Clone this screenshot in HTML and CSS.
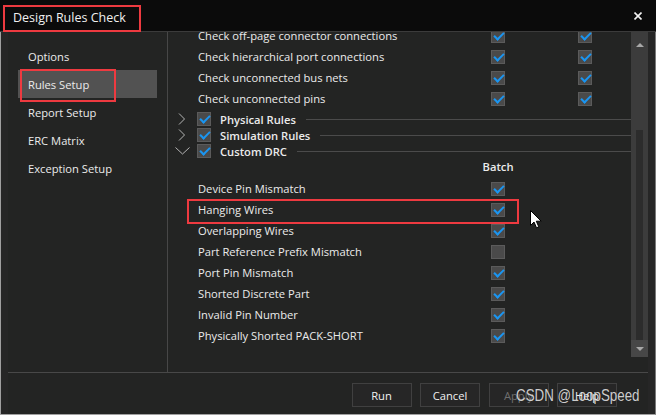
FILE: index.html
```html
<!DOCTYPE html>
<html>
<head>
<meta charset="utf-8">
<link rel="stylesheet" href="styles.css">
</head>
<body>
<div class="window">
  <header class="titlebar">
    <span class="title">Design Rules Check</span>
    <svg class="close" width="8" height="8" viewBox="0 0 8 8"><path d="M0.5 0.5 L7.5 7.5 M7.5 0.5 L0.5 7.5" stroke="#f2f2f2" stroke-width="1.6"/></svg>
  </header>
  <div class="body">
    <div class="main">
      <nav class="sidebar">
        <div class="nav-item">Options</div>
        <div class="nav-item selected">Rules Setup<span class="mark mark-nav"></span></div>
        <div class="nav-item">Report Setup</div>
        <div class="nav-item">ERC Matrix</div>
        <div class="nav-item">Exception Setup</div>
      </nav>
      <section class="content">
        <div class="list">
          <div class="scroller">
            <div class="row"><span>Check off-page connector connections</span><i class="cb on"></i><span></span><i class="cb on"></i></div>
            <div class="row"><span>Check hierarchical port connections</span><i class="cb on"></i><span></span><i class="cb on"></i></div>
            <div class="row"><span>Check unconnected bus nets</span><i class="cb on"></i><span></span><i class="cb on"></i></div>
            <div class="row"><span>Check unconnected pins</span><i class="cb on"></i><span></span><i class="cb on"></i></div>
            <div class="groups">
              <div class="group"><span class="chev"><svg width="8" height="12" viewBox="0 0 8 12"><path d="M1 0.5 L6.5 6 L1 11.5" fill="none" stroke="#b4b4b4" stroke-width="1"/></svg></span><i class="cb on"></i><span class="label">Physical Rules</span><span class="rule"></span></div>
              <div class="group"><span class="chev"><svg width="8" height="12" viewBox="0 0 8 12"><path d="M1 0.5 L6.5 6 L1 11.5" fill="none" stroke="#b4b4b4" stroke-width="1"/></svg></span><i class="cb on"></i><span class="label">Simulation Rules</span><span class="rule"></span></div>
              <div class="group"><span class="chev"><svg width="15" height="8" viewBox="0 0 15 8"><path d="M0.5 0.5 L7.5 7 L14.5 0.5" fill="none" stroke="#b4b4b4" stroke-width="1"/></svg></span><i class="cb on"></i><span class="label">Custom DRC</span><span class="rule"></span></div>
            </div>
            <div class="row batch-head"><span></span><span class="batch">Batch</span></div>
            <div class="row"><span>Device Pin Mismatch</span><i class="cb on"></i></div>
            <div class="row"><span>Hanging Wires</span><i class="cb on"></i><span class="mark mark-row"></span></div>
            <div class="row"><span>Overlapping Wires</span><i class="cb on"></i></div>
            <div class="row"><span>Part Reference Prefix Mismatch</span><i class="cb"></i></div>
            <div class="row"><span>Port Pin Mismatch</span><i class="cb on"></i></div>
            <div class="row"><span>Shorted Discrete Part</span><i class="cb on"></i></div>
            <div class="row"><span>Invalid Pin Number</span><i class="cb on"></i></div>
            <div class="row"><span>Physically Shorted PACK-SHORT</span><i class="cb on"></i></div>
          </div>
        </div>
        <div class="scrollbar">
          <div class="sb-up"><span class="tri-up"></span></div>
          <div class="sb-track"><div class="sb-thumb"></div></div>
          <div class="sb-down"><span class="tri-down"></span></div>
        </div>
      </section>
    </div>
    <footer class="footer">
      <button class="btn">Run</button>
      <button class="btn">Cancel</button>
      <button class="btn disabled">Apply</button>
      <button class="btn">Help</button>
    </footer>
  </div>
  <svg class="cursor" width="13" height="19" viewBox="0 0 13 19"><path d="M0.5 0.5 L0.5 15.5 L4 12 L6.5 17.8 L8.8 16.8 L6.3 11.2 L11.2 11.2 Z" fill="#ffffff" stroke="#000000" stroke-width="1"/></svg>
  <div class="watermark">CSDN @LoopSpeed</div>
</div>
</body>
</html>
```

FILE: styles.css
```css
* { box-sizing: border-box; margin: 0; padding: 0; }
html, body { width: 656px; height: 415px; overflow: hidden; background: #232423; }
body { font-family: "Open Sans", "Noto Sans", sans-serif; font-size: 11.2px; color: #ebebeb; }

.window { width: 656px; height: 415px; display: flex; flex-direction: column; position: relative; }

.titlebar { height: 32px; flex: none; background: #0b0b0b; border-bottom: 1px solid #3b3b3b; display: flex; align-items: flex-start; justify-content: space-between; padding: 5px 0 0 3px; }
.title { height: 27px; width: 138px; border: 2px solid #ee3a40; padding-left: 8px; font-size: 12.5px; line-height: 22px; color: #f0f0f0; white-space: nowrap; }
.close { margin: 7px 14px 0 0; }

.body { flex: 1; display: flex; flex-direction: column; background: #262626; border-left: 1px solid #a0a0a0; border-right: 1px solid #7a7a7a; border-bottom: 1px solid #a0a0a0; padding: 0 7px; }
.main { height: 340px; flex: none; display: flex; background: #232423; }

.sidebar { width: 160px; flex: none; border-right: 1px solid #474747; padding: 10px 10px 0; }
.nav-item { height: 28px; padding-left: 10px; display: flex; align-items: center; position: relative; white-space: nowrap; }
.nav-item.selected { background: #525252; }

.mark { position: absolute; border: 2px solid #ee3a40; pointer-events: none; }
.mark-nav { left: 2px; top: -1px; width: 96px; height: 33px; }
.mark-row { left: 19px; top: 0; width: 332px; height: 25px; }

.content { flex: 1; display: flex; align-items: flex-start; }
.list { width: 463px; height: 340px; overflow: hidden; }
.scroller { margin-top: -7px; }

.row { height: 21px; display: grid; grid-template-columns: 293px 14px 73px 14px; align-items: center; padding-left: 30px; position: relative; white-space: nowrap; }

.cb { display: block; width: 14px; height: 14px; background: #4a4a4a; border: 1px solid #5b5b5b; position: relative; }
.cb.on::after { content: ""; position: absolute; left: 4px; top: 0; width: 4px; height: 8px; border-right: 2.2px solid #1a96f2; border-bottom: 2.2px solid #1a96f2; transform: rotate(45deg); transform-origin: center; }

.groups { margin-top: 2px; }
.group { height: 16px; display: flex; align-items: center; padding-left: 4px; }
.chev { width: 20px; height: 16px; display: flex; align-items: center; justify-content: center; margin-right: 5px; }
.group .label { font-weight: 600; margin-left: 9px; white-space: nowrap; }
.group .rule { flex: 1; height: 1px; background: #4b4b4b; margin-left: 10px; }

.batch-head { height: 19px; align-items: start; }
.batch { font-weight: 600; display: flex; justify-content: center; width: 14px; line-height: 16px; overflow: visible; }

.scrollbar { width: 17px; height: 325px; flex: none; background: #3c3c3c; display: flex; flex-direction: column; }
.sb-up { height: 25px; display: flex; align-items: center; justify-content: center; }
.tri-up { width: 0; height: 0; border-left: 4px solid transparent; border-right: 4px solid transparent; border-bottom: 4px solid #a8a8a8; }
.sb-track { flex: 1; padding-left: 5px; }
.sb-thumb { width: 7px; height: 210px; margin-top: 73px; background: #2c2c2c; }
.sb-down { height: 17px; background: #474747; display: flex; align-items: center; justify-content: center; }
.tri-down { width: 0; height: 0; border-left: 4px solid transparent; border-right: 4px solid transparent; border-top: 4px solid #a8a8a8; }

.footer { height: 42px; flex: none; background: #232423; border-top: 1px solid #484848; display: flex; justify-content: flex-end; gap: 8.5px; padding: 10px 31px 0 0; }
.btn { width: 60px; height: 24px; background: #262626; border: 1px solid #404040; color: #f0f0f0; font-family: "Open Sans", "Noto Sans", sans-serif; font-size: 11.2px; }
.btn.disabled { color: #6f6f6f; }

.cursor { position: absolute; left: 530px; top: 210px; }
.watermark { position: absolute; left: 516px; top: 386px; font-family: "Liberation Sans", Arial, sans-serif; font-size: 16.5px; color: rgba(222, 222, 222, 0.92); transform: scaleX(0.81); transform-origin: left center; white-space: nowrap; }
```
